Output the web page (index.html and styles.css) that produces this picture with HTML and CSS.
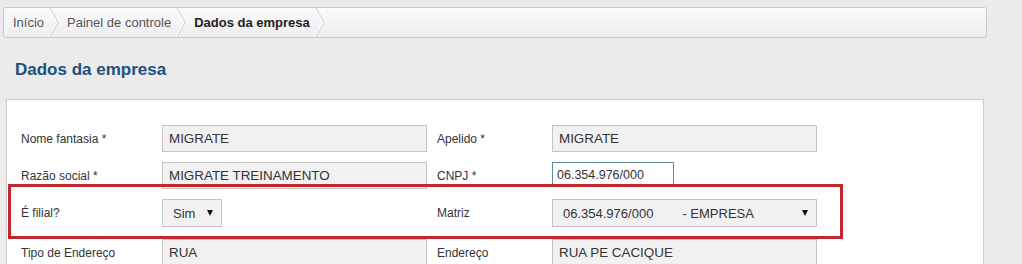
FILE: index.html
```html
<!DOCTYPE html>
<html lang="pt-BR">
<head>
    <meta charset="UTF-8">
    <meta name="viewport" content="width=device-width, initial-scale=1.0">
    <title>Dados da empresa</title>
    <link rel="stylesheet" href="styles.css">
</head>
<body>
    <div class="page">
        <div class="breadcrumb">
            <span class="crumb">Início</span>
            <svg class="sep" width="10" height="29" viewBox="0 0 10 29"><polyline points="1,0 9,14.5 1,29" fill="none" stroke="#c8c8c8" stroke-width="1"/><polyline points="0,0 8,14.5 0,29" fill="none" stroke="#fff" stroke-width="1"/></svg>
            <span class="crumb">Painel de controle</span>
            <svg class="sep" width="10" height="29" viewBox="0 0 10 29"><polyline points="1,0 9,14.5 1,29" fill="none" stroke="#c8c8c8" stroke-width="1"/><polyline points="0,0 8,14.5 0,29" fill="none" stroke="#fff" stroke-width="1"/></svg>
            <span class="crumb active">Dados da empresa</span>
            <svg class="sep" width="10" height="29" viewBox="0 0 10 29"><polyline points="1,0 9,14.5 1,29" fill="none" stroke="#c8c8c8" stroke-width="1"/><polyline points="0,0 8,14.5 0,29" fill="none" stroke="#fff" stroke-width="1"/></svg>
        </div>

        <h1 class="page-title">Dados da empresa</h1>

        <div class="panel">
            <div class="row">
                <label class="label">Nome fantasia *</label>
                <div class="field wide">MIGRATE</div>
                <label class="label">Apelido *</label>
                <div class="field wide">MIGRATE</div>
            </div>
            <div class="row">
                <label class="label">Razão social *</label>
                <div class="field wide">MIGRATE TREINAMENTO</div>
                <label class="label">CNPJ *</label>
                <div class="field focus">06.354.976/000</div>
            </div>
            <div class="row tall">
                <label class="label">É filial?</label>
                <div class="select small"><span>Sim</span><span class="arrow"></span></div>
                <label class="label">Matriz</label>
                <div class="select wide"><span>06.354.976/000<span class="gap">- EMPRESA</span></span><span class="arrow"></span></div>
            </div>
            <div class="row">
                <label class="label">Tipo de Endereço</label>
                <div class="field wide">RUA</div>
                <label class="label">Endereço</label>
                <div class="field wide">RUA PE CACIQUE</div>
            </div>

            <div class="highlight"></div>
        </div>
    </div>
</body>
</html>
```

FILE: styles.css
```css
body {
    margin: 0;
    font-family: "Liberation Sans", Arial, sans-serif;
    background-color: #ebebeb;
    color: #333;
}
.page {
    padding: 7px 35px 0 3px;
}
.breadcrumb {
    display: flex;
    align-items: center;
    height: 29px;
    padding-left: 9px;
    border: 1px solid #c9c9c9;
    border-radius: 3px;
    background: linear-gradient(#fbfbfb, #ededed);
    font-size: 13px;
}
.crumb {
    color: #555;
}
.crumb.active {
    color: #222;
    font-weight: bold;
}
.sep {
    margin: 0 8px 0 5px;
}
.page-title {
    margin: 22px 0 19px 12px;
    font-size: 17px;
    line-height: 20px;
    color: #21507a;
}
.panel {
    position: relative;
    margin: 0 3px;
    height: 200px;
    padding: 25px 0 0 14px;
    background-color: #fff;
    border: 1px solid #cdcdcd;
}
.row {
    display: grid;
    grid-template-columns: 141px 275px 115px 265px;
    align-items: center;
    height: 27px;
    margin-bottom: 10px;
}
.row.tall {
    height: 28px;
    margin-bottom: 12px;
}
.label {
    font-size: 12px;
    color: #333;
}
.field,
.select {
    box-sizing: border-box;
    height: 100%;
    display: flex;
    align-items: center;
    padding-left: 6px;
    background-color: #f1f1f1;
    border: 1px solid #c4c4c4;
    font-size: 13.4px;
    color: #333;
}
.wide {
    width: 265px;
}
.field.focus {
    width: 122px;
    height: 25px;
    align-self: start;
    padding-left: 4px;
    background-color: #fff;
    border-color: #5e8c9c;
    font-size: 12.5px;
}
.select {
    justify-content: space-between;
    padding: 0 8px 0 10px;
    font-size: 13px;
}
.select.small {
    width: 60px;
}
.gap {
    margin-left: 29px;
}
.arrow {
    width: 0;
    height: 0;
    border-left: 3.5px solid transparent;
    border-right: 3.5px solid transparent;
    border-top: 6px solid #111;
}
.highlight {
    position: absolute;
    left: 1px;
    top: 84px;
    width: 829px;
    height: 49px;
    border: 3px solid #c1272d;
}
```
